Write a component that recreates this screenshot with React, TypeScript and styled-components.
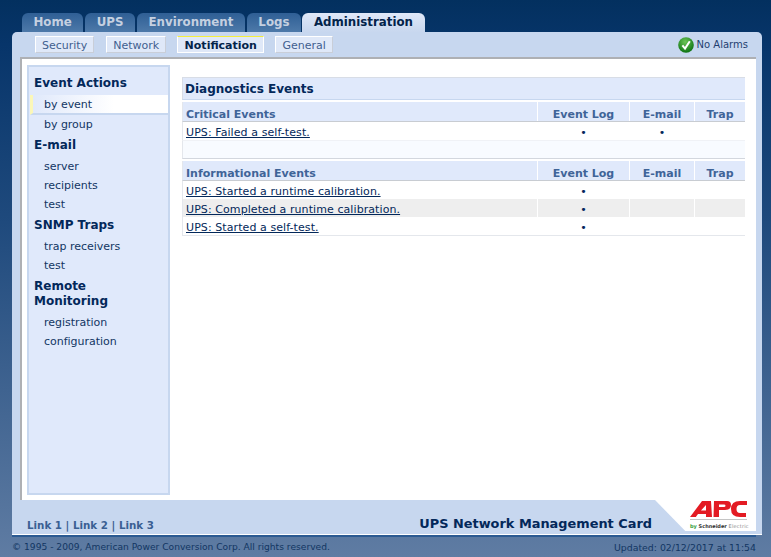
import React from "react";
import styled, { createGlobalStyle } from "styled-components";

const Global = createGlobalStyle`
  html, body { margin: 0; padding: 0; height: 100%; }
  body { font-family: "DejaVu Sans", Verdana, sans-serif; overflow: hidden; }
  #root { height: 100%; }
`;

const Page = styled.div`
  width: 771px;
  height: 557px;
  box-sizing: border-box;
  padding: 13px 9px 0 12px;
  background: linear-gradient(180deg, #03305f 0%, #07356a 8%, #1f4a7d 40%, #5f7ca3 100%);
  display: flex;
  flex-direction: column;
`;

const TabBar = styled.div`
  display: flex;
  gap: 2px;
  height: 19px;
  padding-left: 10px;
`;

const Tab = styled.div<{ $active?: boolean }>`
  box-sizing: border-box;
  height: 19px;
  padding: 0 ${p => (p.$active ? "12px" : "11.5px")};
  margin-left: ${p => (p.$active ? "-1px" : "0")};
  border-radius: 6px 6px 0 0;
  font-size: 11.8px;
  font-weight: 700;
  line-height: 19px;
  color: ${p => (p.$active ? "#03234a" : "#c5d0e0")};
  background: ${p => (p.$active ? "linear-gradient(180deg,#dfe8f8,#c8d7ef)" : "linear-gradient(180deg,#2f5f95,#4d79a9)")};
`;

const Panel = styled.div`
  width: 750px;
  height: 503px;
  box-sizing: border-box;
  background: #c7d7ef;
  border-radius: 5px 5px 0 0;
  display: flex;
  flex-direction: column;
  border-bottom: 1px solid #fff;
`;

const SubBar = styled.div`
  height: 25px;
  box-sizing: border-box;
  padding: 4px 14px 0 23px;
  display: flex;
  align-items: flex-start;
  gap: 12px;
`;

const SubTab = styled.div<{ $active?: boolean }>`
  box-sizing: border-box;
  height: 17px;
  padding: 0 ${p => (p.$active ? "6.5px" : "6px")};
  margin: 0 ${p => (p.$active ? "-1px" : "0")};
  font-size: 11px;
  line-height: 17px;
  font-weight: ${p => (p.$active ? 700 : 400)};
  color: ${p => (p.$active ? "#03234a" : "#3f5f8f")};
  background: #dfe8f8;
  border-top: 1px solid ${p => (p.$active ? "#f4ee3c" : "#fff")};
  border-left: 1px solid #fff;
  border-right: 1px solid ${p => (p.$active ? "#fff" : "#c9ced8")};
  border-bottom: 1px solid ${p => (p.$active ? "#fff" : "#c9ced8")};
`;

const Alarm = styled.div`
  margin-left: auto;
  margin-top: 0;
  display: flex;
  align-items: center;
  gap: 3px;
  font-size: 10px;
  line-height: 18px;
  color: #1f3f70;
`;

const Frame = styled.div`
  flex: none;
  height: 443px;
  margin: 0 6px 0 8px;
  box-sizing: border-box;
  background: #fff;
  border-top: 2px solid #aeb0b4;
  border-left: 2px solid #aeb0b4;
  padding: 6px 11px 5px 5px;
  display: flex;
  gap: 12px;
`;

const Side = styled.nav`
  width: 143px;
  flex: none;
  box-sizing: border-box;
  background: #e0e9fb;
  border: 2px solid #c7d7ef;
  padding-top: 5px;
`;

const SideHead = styled.div`
  font-size: 12px;
  font-weight: 700;
  line-height: 15px;
  color: #03285a;
  padding: 4px 5px 4px 5px;
`;

const SideItem = styled.div<{ $active?: boolean }>`
  box-sizing: border-box;
  height: ${p => (p.$active ? 20 : 19)}px;
  font-size: 11px;
  line-height: 19px;
  letter-spacing: -0.03px;
  color: #123663;
  padding-left: 15px;
  ${p => p.$active ? `
    margin: 0 0 0 1px;
    padding-left: 11px;
    border-left: 3px solid #fbf7b8;
    background: linear-gradient(90deg, #e0e9fb 0%, #fff 60%);
    border-bottom: 2px solid #c7d7ef;
  ` : ""}
`;

const Main = styled.main`
  flex: 1;
  padding-top: 12px;
  min-width: 0;
`;

const Title = styled.div`
  height: 23px;
  box-sizing: border-box;
  background: #e0e9fb;
  border-top: 1px solid #d8dde6;
  border-left: 1px solid #d8dde6;
  border-bottom: 1px solid #c7d7ef;
  font-size: 12px;
  font-weight: 700;
  line-height: 23px;
  color: #03285a;
  padding-left: 2px;
`;

const Row = styled.div<{ $bg?: string }>`
  display: grid;
  grid-template-columns: 354px 92px 65px 51px;
  background: ${p => p.$bg ?? "#fff"};
  border-left: 1px solid #e4e7ec;
  box-sizing: border-box;
`;

const HeadRow = styled(Row)`
  height: 20px;
  margin-top: 2px;
  border-bottom: 1px solid #c8ccd2;
  background: #e0e9fb;
`;

const HeadCell = styled.div<{ $center?: boolean }>`
  font-size: 11px;
  font-weight: 700;
  line-height: 25px;
  height: 19px;
  color: #3f6498;
  padding-left: ${p => (p.$center ? 0 : "3px")};
  text-align: ${p => (p.$center ? "center" : "left")};
  border-left: ${p => (p.$center ? "1px solid #fff" : "none")};
`;

const BodyRow = styled(Row)`
  height: 18px;
`;

const Cell = styled.div<{ $center?: boolean }>`
  font-size: 11px;
  line-height: 21px;
  height: 18px;
  letter-spacing: 0.08px;
  color: #03285a;
  padding-left: ${p => (p.$center ? 0 : "3px")};
  text-align: ${p => (p.$center ? "center" : "left")};
  border-left: ${p => (p.$center ? "1px solid #fff" : "none")};
  white-space: nowrap;
`;

const EventLink = styled.a`
  color: #03285a;
  text-decoration: underline;
`;

const Spacer = styled.div`
  height: 19px;
  box-sizing: border-box;
  background: #f8fbff;
  border-left: 1px solid #e4e7ec;
  border-top: 1px solid #f0f2f6;
  border-bottom: 1px solid #d3d7de;
`;

const BottomLine = styled.div`
  height: 1px;
  background: #e4e7ec;
`;

const Footer = styled.div`
  flex: 1;
  position: relative;
  display: flex;
  align-items: flex-end;
  padding: 0 110px 2px 15px;
`;

const FooterLinks = styled.div`
  font-size: 10.3px;
  font-weight: 700;
  line-height: 14px;
  color: #3a5f93;
`;

const CardName = styled.div`
  margin-left: auto;
  font-size: 12.9px;
  font-weight: 700;
  line-height: 17px;
  color: #03285a;
`;

const LogoCorner = styled.div`
  position: absolute;
  top: 0;
  right: 6px;
  width: 101px;
  height: 31px;
  background: #fff;
  clip-path: polygon(0 0, 100% 0, 100% 100%, 30% 100%);
`;

const LogoRule = styled.div`
  position: absolute;
  left: 35px;
  width: 57px;
  top: 19px;
  height: 1px;
  background: #c4c4c4;
`;

const LogoText = styled.div`
  position: absolute;
  left: 35px;
  top: 23px;
  font-size: 5px;
  line-height: 6px;
  font-weight: 700;
  color: #333;
  white-space: nowrap;
`;

const Green = styled.span`
  color: #2f9a35;
`;

const Faint = styled.span`
  color: #8a8a8a;
  font-weight: 400;
  letter-spacing: 0.2px;
`;

const Legal = styled.div`
  display: flex;
  justify-content: space-between;
  border-top: 2px solid #2b5a92;
  padding: 4px 0 0 0;
  width: 744px;
  font-size: 9.15px;
  line-height: 13px;
  color: #123663;
`;

const Updated = styled.span`
  font-size: 9.35px;
`;

function Check() {
  return (
    <svg width="16" height="16" viewBox="0 0 16 16">
      <defs>
        <radialGradient id="g" cx="45%" cy="30%" r="75%">
          <stop offset="0" stopColor="#6bc456" />
          <stop offset="1" stopColor="#066d0e" />
        </radialGradient>
      </defs>
      <circle cx="8" cy="8" r="7.8" fill="url(#g)" />
      <path d="M4.4 8.4 L7 11.6 L11.8 4.2" fill="none" stroke="#fff" strokeWidth="2" />
    </svg>
  );
}

function ApcLogo() {
  return (
    <svg width="57" height="16" viewBox="0 0 57 16" style={{ position: "absolute", left: 35, top: 1 }}>
      <path
        fill="#e31b23"
        fillRule="evenodd"
        d="M0 16 L12 0 L21 0 L22 16 L16 16 L16 13 L8 13 L5.8 16 Z M11 9.5 L16 9.5 L16 4 Z
           M24 0 L37 0 Q41 0 41 4 Q41 9 35 9 L29 9 L29 16 L23.5 16 Z M29 3.5 L34 3.5 Q35.5 3.5 35.5 4.7 Q35.5 6 34 6 L29 6 Z
           M57 0 L50 0 Q41 0 41 8 Q41 16 50 16 L56 16 L56 12 L50 12 Q46.5 12 46.5 8 Q46.5 4 50 4 L57 4 Z"
      />
    </svg>
  );
}

const Dot = () => <>•</>;

export default function App() {
  return (
    <Page>
      <Global />
      <TabBar>
        <Tab>Home</Tab>
        <Tab>UPS</Tab>
        <Tab>Environment</Tab>
        <Tab>Logs</Tab>
        <Tab $active>Administration</Tab>
      </TabBar>
      <Panel>
        <SubBar>
          <SubTab>Security</SubTab>
          <SubTab>Network</SubTab>
          <SubTab $active>Notification</SubTab>
          <SubTab>General</SubTab>
          <Alarm><Check />No Alarms</Alarm>
        </SubBar>
        <Frame>
          <Side>
            <SideHead>Event Actions</SideHead>
            <SideItem $active>by event</SideItem>
            <SideItem>by group</SideItem>
            <SideHead>E-mail</SideHead>
            <SideItem>server</SideItem>
            <SideItem>recipients</SideItem>
            <SideItem>test</SideItem>
            <SideHead>SNMP Traps</SideHead>
            <SideItem>trap receivers</SideItem>
            <SideItem>test</SideItem>
            <SideHead>Remote Monitoring</SideHead>
            <SideItem>registration</SideItem>
            <SideItem>configuration</SideItem>
          </Side>
          <Main>
            <Title>Diagnostics Events</Title>
            <HeadRow>
              <HeadCell>Critical Events</HeadCell>
              <HeadCell $center>Event Log</HeadCell>
              <HeadCell $center>E-mail</HeadCell>
              <HeadCell $center>Trap</HeadCell>
            </HeadRow>
            <BodyRow>
              <Cell><EventLink>UPS: Failed a self-test.</EventLink></Cell>
              <Cell $center><Dot /></Cell>
              <Cell $center><Dot /></Cell>
              <Cell $center />
            </BodyRow>
            <Spacer />
            <HeadRow>
              <HeadCell>Informational Events</HeadCell>
              <HeadCell $center>Event Log</HeadCell>
              <HeadCell $center>E-mail</HeadCell>
              <HeadCell $center>Trap</HeadCell>
            </HeadRow>
            <BodyRow>
              <Cell><EventLink>UPS: Started a runtime calibration.</EventLink></Cell>
              <Cell $center><Dot /></Cell>
              <Cell $center />
              <Cell $center />
            </BodyRow>
            <BodyRow $bg="#eeeeee">
              <Cell><EventLink>UPS: Completed a runtime calibration.</EventLink></Cell>
              <Cell $center><Dot /></Cell>
              <Cell $center />
              <Cell $center />
            </BodyRow>
            <BodyRow>
              <Cell><EventLink>UPS: Started a self-test.</EventLink></Cell>
              <Cell $center><Dot /></Cell>
              <Cell $center />
              <Cell $center />
            </BodyRow>
            <BottomLine />
          </Main>
        </Frame>
        <Footer>
          <FooterLinks>Link 1 | Link 2 | Link 3</FooterLinks>
          <CardName>UPS Network Management Card</CardName>
          <LogoCorner>
            <ApcLogo />
            <LogoRule />
            <LogoText><Green>by</Green> Schneider <Faint>Electric</Faint></LogoText>
          </LogoCorner>
        </Footer>
      </Panel>
      <Legal>
        <span>© 1995 - 2009, American Power Conversion Corp. All rights reserved.</span>
        <Updated>Updated: 02/12/2017 at 11:54</Updated>
      </Legal>
    </Page>
  );
}
